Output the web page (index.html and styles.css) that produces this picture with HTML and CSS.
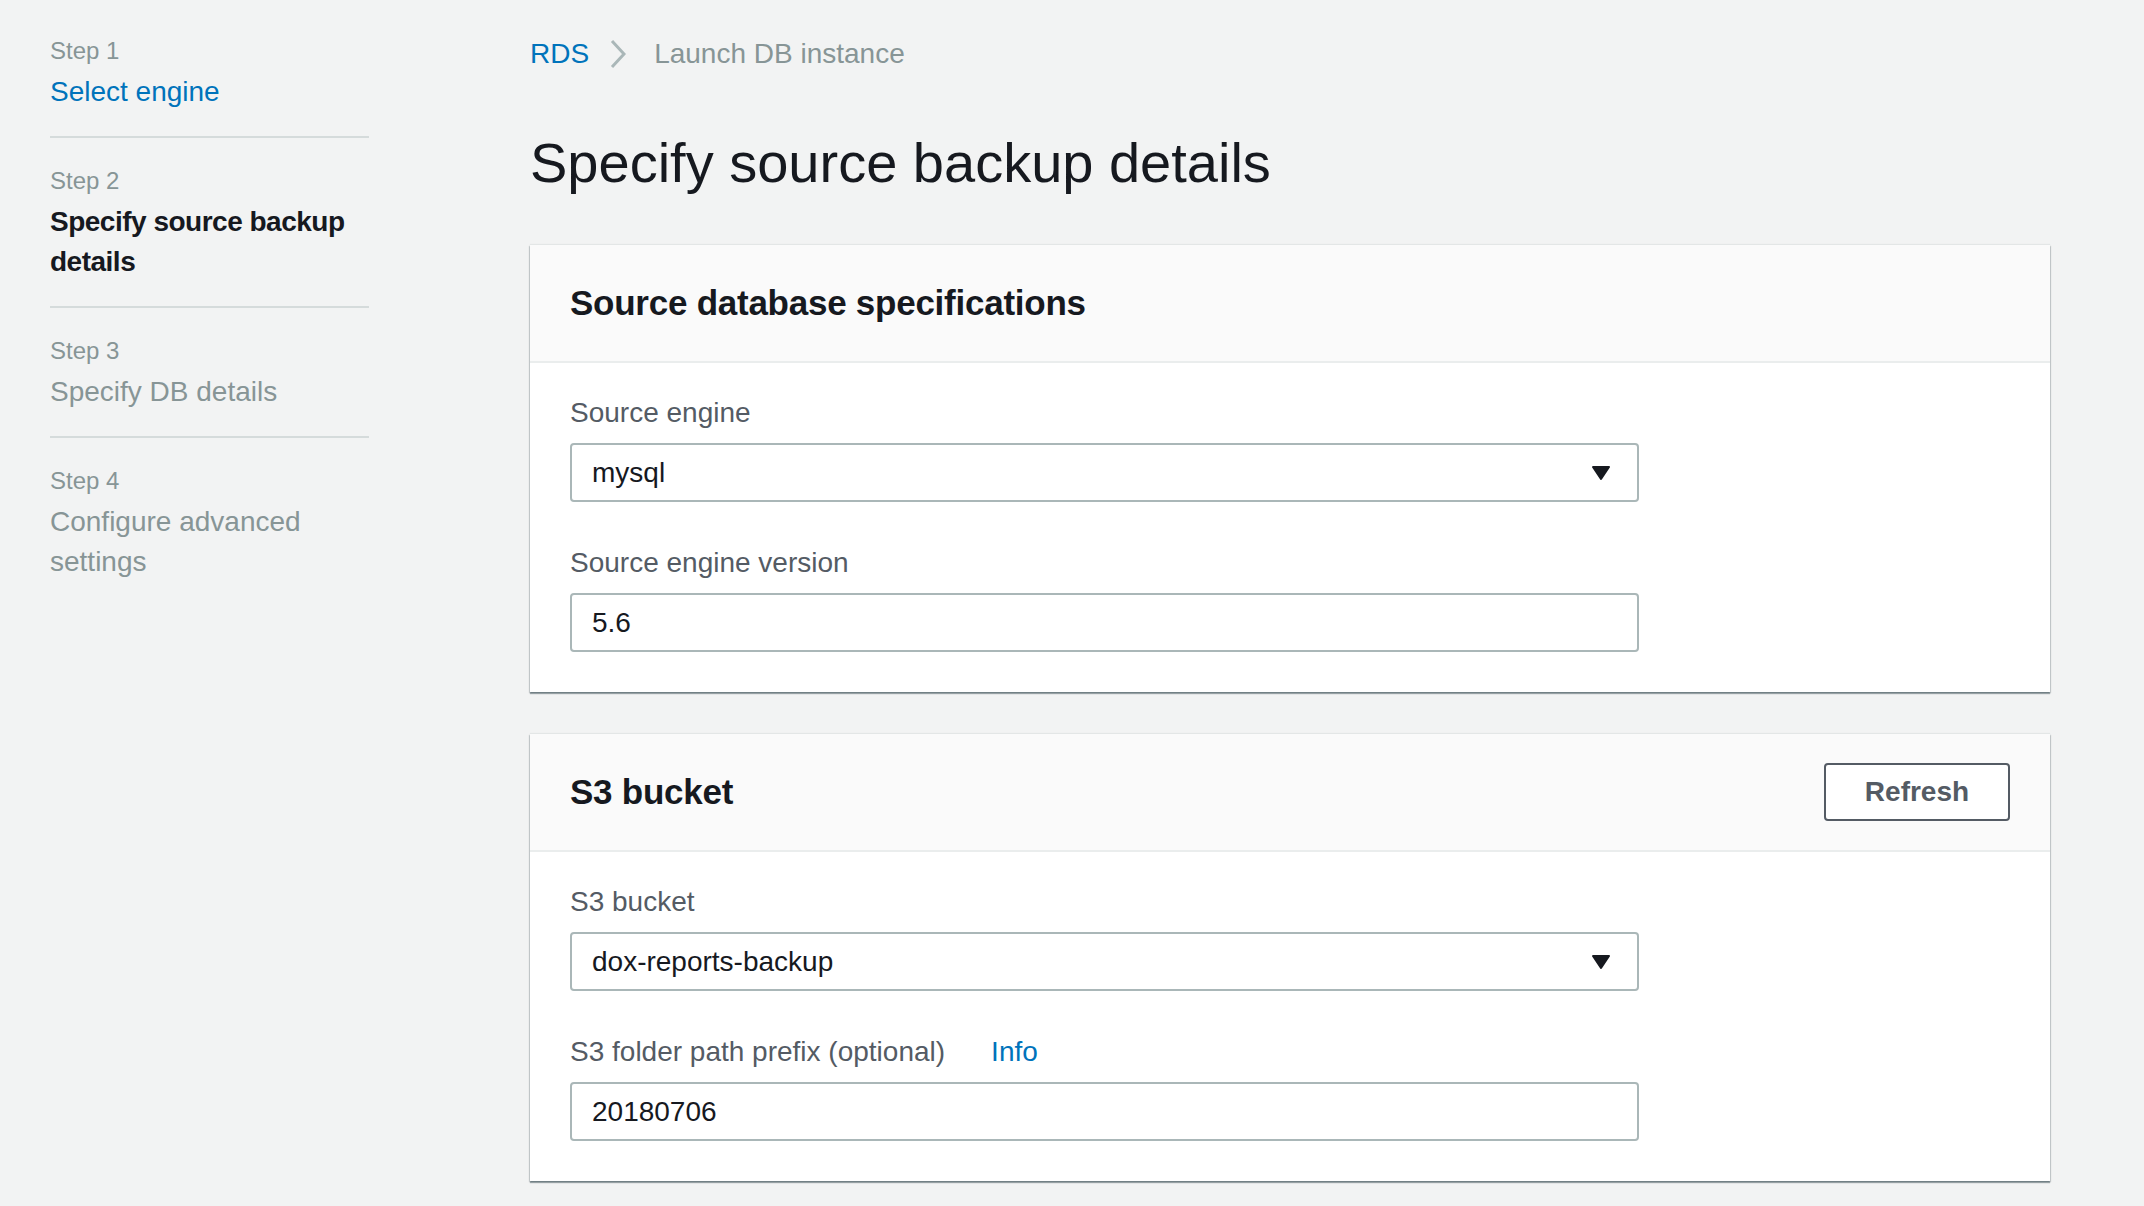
FILE: index.html
```html
<!DOCTYPE html>
<html lang="en">
<head>
<meta charset="utf-8">
<title>Specify source backup details</title>
<link rel="stylesheet" href="styles.css">
</head>
<body>
<div class="page">
  <nav class="steps">
    <div class="step">
      <div class="step-num">Step 1</div>
      <div class="step-title link">Select engine</div>
    </div>
    <div class="step">
      <div class="step-num">Step 2</div>
      <div class="step-title current">Specify source backup details</div>
    </div>
    <div class="step">
      <div class="step-num">Step 3</div>
      <div class="step-title disabled">Specify DB details</div>
    </div>
    <div class="step last">
      <div class="step-num">Step 4</div>
      <div class="step-title disabled">Configure advanced settings</div>
    </div>
  </nav>

  <main class="main">
    <div class="breadcrumb">
      <span class="crumb-link">RDS</span>
      <svg class="crumb-sep" width="16" height="30" viewBox="0 0 16 30"><polyline points="2,2 14,15 2,28" fill="none" stroke="#aab7b8" stroke-width="3"/></svg>
      <span class="crumb-current">Launch DB instance</span>
    </div>
    <h1 class="title">Specify source backup details</h1>

    <section class="panel">
      <div class="panel-header">
        <h2 class="panel-title">Source database specifications</h2>
      </div>
      <div class="panel-body">
        <div class="field">
          <div class="label">Source engine</div>
          <div class="control select">
            <span class="value">mysql</span>
            <svg class="caret" width="20" height="16" viewBox="0 0 20 16"><path d="M2 2 H18 L10 14 Z" fill="#16191f" stroke="#16191f" stroke-width="2" stroke-linejoin="round"/></svg>
          </div>
        </div>
        <div class="field">
          <div class="label">Source engine version</div>
          <div class="control"><span class="value">5.6</span></div>
        </div>
      </div>
    </section>

    <section class="panel">
      <div class="panel-header">
        <h2 class="panel-title">S3 bucket</h2>
        <button class="btn">Refresh</button>
      </div>
      <div class="panel-body">
        <div class="field">
          <div class="label">S3 bucket</div>
          <div class="control select">
            <span class="value">dox-reports-backup</span>
            <svg class="caret" width="20" height="16" viewBox="0 0 20 16"><path d="M2 2 H18 L10 14 Z" fill="#16191f" stroke="#16191f" stroke-width="2" stroke-linejoin="round"/></svg>
          </div>
        </div>
        <div class="field">
          <div class="label">S3 folder path prefix (optional)<span class="info">Info</span></div>
          <div class="control"><span class="value">20180706</span></div>
        </div>
      </div>
    </section>
  </main>
</div>
</body>
</html>
```

FILE: styles.css
```css
* { box-sizing: border-box; }

html, body {
  margin: 0;
  padding: 0;
  background: #f2f3f3;
  font-family: "Liberation Sans", Arial, sans-serif;
  color: #16191f;
}

.page {
  display: flex;
  align-items: flex-start;
  padding: 8px 0 0 50px;
  min-height: 1206px;
}

/* Sidebar steps */
.steps {
  width: 319px;
  flex: none;
}

.step {
  padding: 26px 0 24px;
  border-bottom: 2px solid #d5dbdb;
}

.step.last {
  border-bottom: none;
}

.step-num {
  font-size: 24px;
  line-height: 34px;
  color: #879596;
}

.step-title {
  margin-top: 4px;
  font-size: 28px;
  line-height: 40px;
}

.step-title.link { color: #0073bb; }
.step-title.current { color: #16191f; font-weight: bold; letter-spacing: -0.5px; }
.step-title.disabled { color: #879596; }

/* Main column */
.main {
  margin-left: 161px;
  width: 1520px;
  flex: none;
  padding-top: 26px;
}

.breadcrumb {
  display: flex;
  align-items: center;
  height: 40px;
  font-size: 28px;
  line-height: 40px;
}

.crumb-link { color: #0073bb; }

.crumb-sep {
  margin: 0 28px 0 21px;
  display: block;
}

.crumb-current { color: #879596; }

.title {
  margin: 57px 0 0;
  font-size: 56px;
  line-height: 64px;
  font-weight: normal;
  color: #16191f;
}

.panel {
  margin-top: 50px;
  background: #ffffff;
  box-shadow: 0 2px 1px 0 rgba(0, 28, 36, 0.35), 1px 1px 1px 0 rgba(0, 28, 36, 0.15), -1px 1px 1px 0 rgba(0, 28, 36, 0.15), 0 -1px 1px 0 rgba(0, 28, 36, 0.06);
}

.panel + .panel {
  margin-top: 42px;
}

.panel-header {
  height: 118px;
  display: flex;
  align-items: center;
  justify-content: space-between;
  padding: 0 40px;
  background: #fafafa;
  border-bottom: 2px solid #eaeded;
}

.panel-title {
  margin: 0;
  font-size: 35px;
  letter-spacing: -0.25px;
  font-weight: bold;
  color: #16191f;
}

.btn {
  width: 186px;
  height: 58px;
  border: 2px solid #545b64;
  border-radius: 4px;
  background: #ffffff;
  color: #545b64;
  font-family: "Liberation Sans", Arial, sans-serif;
  font-size: 28px;
  font-weight: bold;
  padding: 0;
}

.panel-body {
  padding: 30px 40px 40px;
}

.field + .field {
  margin-top: 41px;
}

.label {
  font-size: 28px;
  line-height: 40px;
  color: #545b64;
}

.info {
  margin-left: 46px;
  color: #0073bb;
}

.control {
  margin-top: 10px;
  width: 1069px;
  height: 59px;
  border: 2px solid #aab7b8;
  border-radius: 4px;
  background: #ffffff;
  display: flex;
  align-items: center;
  justify-content: space-between;
  padding: 0 26px 0 20px;
}

.value {
  font-size: 28px;
  color: #16191f;
}

.caret {
  display: block;
}
```
